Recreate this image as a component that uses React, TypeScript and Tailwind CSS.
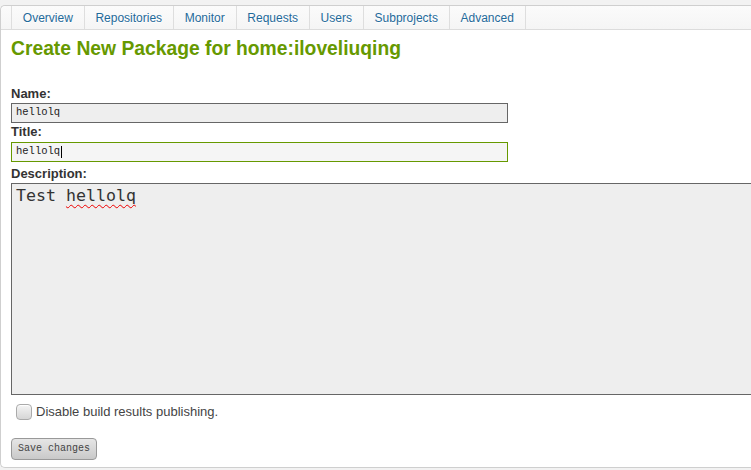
const tabs = ["Overview", "Repositories", "Monitor", "Requests", "Users", "Subprojects", "Advanced"];

export default function App() {
  return (
    <div className="h-[470px] overflow-hidden bg-[#f2f2f2] pt-[5px] font-['Liberation_Sans',Arial,sans-serif]">
      <div className="ml-0 h-[463px] rounded-l-[5px] border-y border-l border-[#cfcfcf] bg-white">
        <div className="flex h-[24px] rounded-tl-[5px] border-b border-[#dcdcdc] bg-[linear-gradient(180deg,#fbfbfb,#f5f5f5)] pl-[10px]">
          {tabs.map((t, i) => (
            <div
              key={t}
              className={`flex items-center border-l border-[#dedede] px-[10.8px] pt-[1px] text-[12px] text-[#1f6a9a] [text-shadow:0_1px_0_#fff] ${i === tabs.length - 1 ? "border-r" : ""}`}
            >
              {t}
            </div>
          ))}
        </div>

        <div className="pl-[10px]">
          <h1 className="mt-[7px] text-[19.3px] leading-[24px] font-bold text-[#669900]">
            Create New Package for home:iloveliuqing
          </h1>

          <div className="mt-[26px] text-[13px] leading-[14px] font-bold text-[#333]">Name:</div>
          <div className="mt-[2px] flex h-[20px] w-[497px] items-center border border-[#666] bg-[#eeeeee] pl-[4px] font-['Liberation_Mono',monospace] text-[10.5px] text-[#222]">
            hellolq
          </div>

          <div className="mt-[1px] text-[13px] leading-[16px] font-bold text-[#333]">Title:</div>
          <div className="mt-[2px] flex h-[20px] w-[497px] items-center border border-[#669900] bg-[#f5f5f5] pl-[4px] font-['Liberation_Mono',monospace] text-[10.5px] text-[#222]">
            hellolq<span className="ml-[1px] inline-block h-[12px] w-px bg-black" />
          </div>

          <div className="mt-[3px] text-[13px] leading-[17px] font-bold text-[#333]">Description:</div>
          <div className="mt-[1px] h-[212px] border-y border-l border-[#666] bg-[#eeeeee] pt-[2px] pl-[4px] font-['DejaVu_Sans_Mono',monospace] text-[16.6px] leading-[20px] text-[#333]">
            Test <span className="underline decoration-[#e00] decoration-wavy decoration-1 underline-offset-[3px]">hellolq</span>
          </div>

          <label className="mt-[7px] ml-[5px] flex items-center text-[13px] text-[#444]">
            <span className="inline-block h-[16px] w-[16px] rounded-[4px] border border-[#aaa] bg-[linear-gradient(180deg,#f4f4f4,#d6d6d6)] shadow-[inset_0_1px_1px_#fff]" />
            <span className="ml-[4px]">Disable build results publishing.</span>
          </label>

          <button className="mt-[16px] flex h-[22px] w-[86px] items-center justify-center rounded-[4px] border border-[#999] bg-[linear-gradient(180deg,#e6e6e6,#c9c9c9)] font-['Liberation_Mono',monospace] text-[10px] text-[#444]">
            Save changes
          </button>
        </div>
      </div>
    </div>
  );
}
